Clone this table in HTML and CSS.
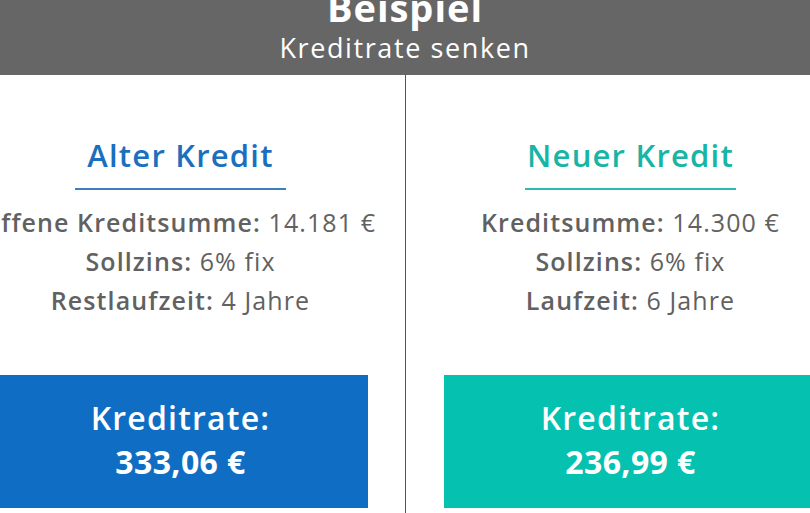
FILE: index.html
```html
<!DOCTYPE html>
<html lang="de">
<head>
<meta charset="utf-8">
<title>Beispiel – Kreditrate senken</title>
<link rel="stylesheet" href="styles.css">
</head>
<body>
<header class="banner">
  <h1 class="banner-title">Beispiel</h1>
  <p class="banner-sub">Kreditrate senken</p>
</header>
<main class="compare">
  <section class="col col-old">
    <h2 class="col-title">Alter Kredit</h2>
    <div class="col-rule"></div>
    <ul class="facts">
      <li><b>offene Kreditsumme:</b> 14.181 €</li>
      <li><b>Sollzins:</b> 6% fix</li>
      <li><b>Restlaufzeit:</b> 4 Jahre</li>
    </ul>
    <div class="rate">
      <span class="rate-label">Kreditrate:</span>
      <span class="rate-value">333,06 €</span>
    </div>
  </section>
  <div class="divider"></div>
  <section class="col col-new">
    <h2 class="col-title">Neuer Kredit</h2>
    <div class="col-rule"></div>
    <ul class="facts">
      <li><b>Kreditsumme:</b> 14.300 €</li>
      <li><b>Sollzins:</b> 6% fix</li>
      <li><b>Laufzeit:</b> 6 Jahre</li>
    </ul>
    <div class="rate">
      <span class="rate-label">Kreditrate:</span>
      <span class="rate-value">236,99 €</span>
    </div>
  </section>
</main>
</body>
</html>
```
FILE: styles.css
```css
html, body {
  margin: 0;
  padding: 0;
  background: #ffffff;
  overflow: hidden;
}
body {
  width: 810px;
  height: 513px;
  font-family: "Open Sans", "Noto Sans", sans-serif;
  color: #616161;
}
.banner {
  height: 75px;
  background: #666666;
  color: #ffffff;
  text-align: center;
  overflow: hidden;
  display: flex;
  flex-direction: column;
  align-items: center;
}
.banner-title {
  margin: -13px 0 0;
  font-size: 38px;
  line-height: 40px;
  font-weight: 700;
  letter-spacing: 1px;
}
.banner-sub {
  margin: 4px 0 0;
  font-size: 27px;
  line-height: 34px;
  font-weight: 400;
  letter-spacing: 1.6px;
}
.compare {
  display: flex;
  margin-left: -44px;
  width: 899px;
  height: 438px;
}
.divider {
  width: 1px;
  background: #555555;
  flex: none;
}
.col {
  width: 449px;
  flex: none;
  display: flex;
  flex-direction: column;
  align-items: center;
  padding-top: 61px;
  box-sizing: border-box;
}
.col-title {
  margin: 0;
  font-size: 31px;
  line-height: 38px;
  font-weight: 600;
  letter-spacing: 1.2px;
}
.col-rule {
  width: 211px;
  height: 2px;
  margin-top: 14px;
}
.col-old .col-title { color: #1a6fbf; }
.col-old .col-rule { background: #3d7fc0; }
.col-new .col-title { color: #17b5a5; }
.col-new .col-rule { background: #2cbcae; }
.facts {
  list-style: none;
  margin: 13px 0 0;
  padding: 0;
  text-align: center;
  font-size: 25px;
  line-height: 39px;
  font-weight: 500;
  letter-spacing: 1.1px;
  white-space: nowrap;
}
.facts b {
  font-weight: 600;
}
.rate {
  margin-top: 55px;
  width: 374px;
  height: 133px;
  box-sizing: border-box;
  padding-top: 21px;
  display: flex;
  flex-direction: column;
  align-items: center;
  color: #ffffff;
  font-size: 32px;
  line-height: 44px;
  font-weight: 600;
  letter-spacing: 1.2px;
}
.col-old .rate { background: #0f6ec4; }
.col-new .rate { background: #05c1b0; }
.rate-label { font-weight: 600; }
.rate-value { font-weight: 700; letter-spacing: 0.4px; }
```
